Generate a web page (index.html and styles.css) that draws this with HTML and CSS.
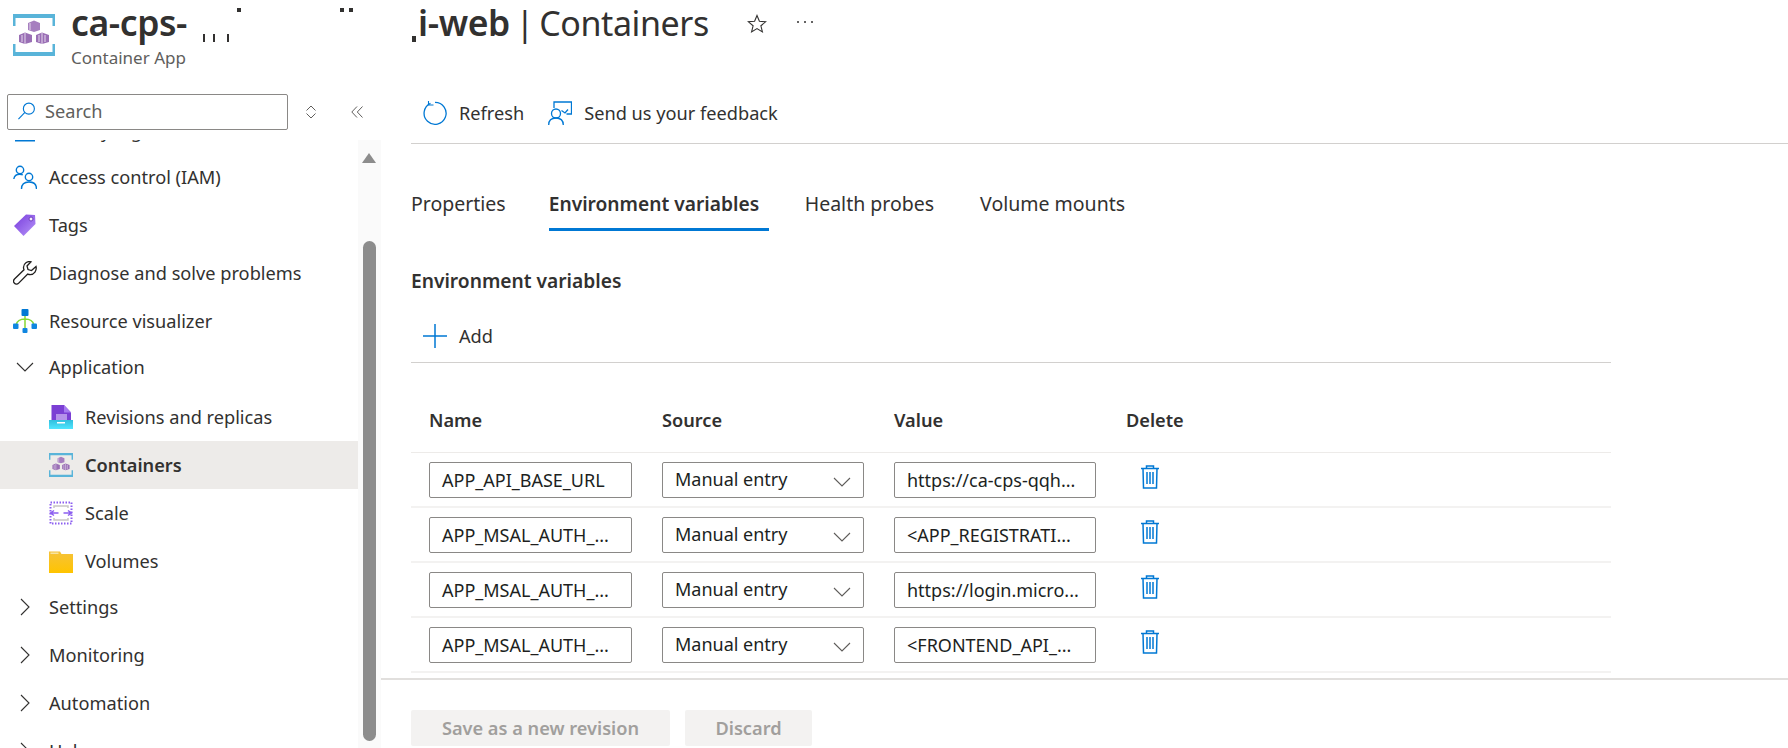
FILE: index.html
```html
<!DOCTYPE html>
<html lang="en">
<head>
  <meta charset="UTF-8">
  <title>Containers - Container App</title>
  <link rel="stylesheet" href="styles.css">
</head>
<body>

  <svg class="sprite" width="0" height="0">
    <symbol id="app-icon" viewBox="0 0 42 42">
      <path d="M0 0h42v12h-2.500V4H2.500v8H0zM0 30h2.500v8h37v-8H42v12H0z" fill="#59b4d9"/>
      <path d="M0 0h42v3.500H0zM0 38.500h42V42H0z" fill="#59b4d9"/>
      <path d="M15 9l6-2.500V18l-6-2zM21 6.500l6 2.500v7l-6 2z" fill="#a67fbf"/>
      <path d="M6 21l6-2.500V30l-6-2zM12 18.500l7 2.500v7l-7 2z" fill="#9a6fb5"/>
      <path d="M23 21l6-2.500V30l-6-2zM29 18.500l7 2.500v7l-7 2z" fill="#9a6fb5"/>
      <path d="M17 9v7M9 21v7M26 21v7M32 21v7M12 19v11M29 19v11" stroke="#e6daee" fill="none"/>
    </symbol>
    <symbol id="trash" viewBox="0 0 20 24">
      <path d="M1 3.500h18M6.500 3.500V1h7v2.500M3 3.500l.5 19.500h13L17 3.500M7 7v12M10 7v12M13 7v12" fill="none" stroke="#0078d4" stroke-width="1.500"/>
    </symbol>
    <symbol id="chev-down" viewBox="0 0 18 10">
      <path d="M1 1l8 8 8-8" fill="none" stroke="currentColor" stroke-width="1.100"/>
    </symbol>
    <symbol id="chev-right" viewBox="0 0 10 18">
      <path d="M1 1l8 8-8 8" fill="none" stroke="currentColor" stroke-width="1.100"/>
    </symbol>
  </svg>

  <header class="blade-header">
    <svg class="app-icon"><use href="#app-icon"/></svg>
    <div class="blade-titles">
      <div class="title-row">
        <h1><b>ca-cps-</b><span class="redacted"><i class="mark m1"></i><i class="mark m2"></i><i class="mark m3"></i><i class="mark m4"></i><i class="mark m5"></i><i class="mark m6"></i></span><b><span class="scrap"></span>i-web</b> | Containers</h1>
        <svg class="star" viewBox="0 0 20 20"><path d="M10 1.500l2.400 5.800 6.200.5-4.700 4 1.500 6.100-5.400-3.300-5.400 3.300 1.500-6.100-4.700-4 6.200-.5z" fill="none" stroke="#323130" stroke-width="1.100"/></svg>
        <svg class="dots" viewBox="0 0 16 2"><circle cx="1" cy="1" r="1"/><circle cx="8" cy="1" r="1"/><circle cx="15" cy="1" r="1"/></svg>
      </div>
      <div class="blade-sub">Container App</div>
    </div>
  </header>

  <div class="blade-body">
    <aside class="sidebar">
      <div class="search-row">
        <div class="search-box">
          <svg class="search-icon" viewBox="0 0 20 20"><circle cx="12.500" cy="7" r="5.800" fill="none" stroke="#0078d4" stroke-width="1.200"/><path d="M8.300 11L1.500 18" stroke="#0078d4" stroke-width="1.200"/></svg>
          <span>Search</span>
        </div>
        <svg class="updown" viewBox="0 0 12 14"><path d="M1.500 5.500L6 1l4.500 4.500M1.500 8.500L6 13l4.500-4.500" fill="none" stroke="#605e5c" stroke-width="1"/></svg>
        <svg class="collapse" viewBox="0 0 12 12"><path d="M6 .5L.8 6 6 11.500M11.500 .5L6.300 6l5.200 5.500" fill="none" stroke="#605e5c" stroke-width="1"/></svg>
      </div>

      <div class="nav-wrap">
        <nav class="nav">
          <a class="item clipped">
            <svg class="icon" viewBox="0 0 24 24"><rect x="2" y="2" width="20" height="20.500" fill="#0078d4"/></svg>
            Activity log
          </a>
          <a class="item">
            <svg class="icon" viewBox="0 0 24 24"><g fill="none" stroke="#0078d4" stroke-width="1.400"><circle cx="7" cy="5" r="3.700"/><circle cx="16" cy="12" r="3.700"/><path d="M.8 14c.5-3 3-4.800 6-4.800 1.200 0 2.200.3 3 .8M8.500 24c0-4.500 3-7 7.500-7s7.500 2.500 7.500 7"/></g></svg>
            Access control (IAM)
          </a>
          <a class="item">
            <svg class="icon" viewBox="0 0 24 24"><defs><linearGradient id="tag-fill" x1="0" y1="0" x2="1" y2="1"><stop offset="0" stop-color="#773adc"/><stop offset="1" stop-color="#b796f9"/></linearGradient></defs><path d="M1 13L13 1.500l9 .5.500 9L10.500 23z" fill="url(#tag-fill)"/><circle cx="18" cy="6" r="2" fill="#f2edfb" stroke="#6f3bc0"/></svg>
            Tags
          </a>
          <a class="item">
            <svg class="icon" viewBox="0 0 24 24"><path d="M23 5.500l-4.500 4-3.500-1-1-3.500 4-4.200c-3.500-1-7.500 1.500-7.500 5.500 0 1 .2 1.800.5 2.500L1.500 18c-1.500 1.600-.8 3.500 0 4.300s2.700 1.400 4.200-.2l9-9c.8.300 1.600.5 2.500.5 4 0 6.800-3.800 5.800-8.100z" fill="none" stroke="#201f1e" stroke-width="1.300"/></svg>
            Diagnose and solve problems
          </a>
          <a class="item">
            <svg class="icon" viewBox="0 0 24 24"><path d="M12 6v16M3 16c1-4 5-6 9-6s8 2 9 6" fill="none" stroke="#86d633" stroke-width="1.500"/><rect x="8.500" y="0" width="7" height="7" rx="1" fill="#0078d4"/><rect x="0" y="14.500" width="5.500" height="5.500" rx="1" fill="#0f86e0"/><rect x="18.500" y="14.500" width="5.500" height="5.500" rx="1" fill="#0f86e0"/><rect x="9.500" y="19" width="5" height="5" rx="1" fill="#0f86e0"/></svg>
            Resource visualizer
          </a>
          <a class="item group open">
            <svg class="chev-down"><use href="#chev-down"/></svg>
            Application
          </a>
          <a class="item sub first-sub">
            <svg class="icon" viewBox="0 0 24 24"><defs><linearGradient id="tray-fill" x1="0" y1="0" x2="0" y2="1"><stop offset="0" stop-color="#32bedd"/><stop offset="1" stop-color="#50e6ff"/></linearGradient></defs><path d="M2.500 0H15l7 7.500V16H2.500z" fill="#7b3fd4"/><path d="M15 0l7 7.500h-7z" fill="#a67af0"/><rect x="7" y="9" width="11" height="6" fill="#b692ea"/><path d="M0 15h24v9H0z" fill="url(#tray-fill)"/><rect x="8" y="17" width="8" height="1.500" fill="#fff"/></svg>
            Revisions and replicas
          </a>
          <a class="item sub active">
            <svg class="icon"><use href="#app-icon"/></svg>
            Containers
          </a>
          <a class="item sub">
            <svg class="icon" viewBox="0 0 24 24"><rect x="1.500" y="1.500" width="21" height="21" fill="none" stroke="#8c5ff0" stroke-width="2" stroke-dasharray="1.500 1.500"/><path d="M5 7V5h14v2M5 17v2h14v-2" fill="none" stroke="#c8c6c4" stroke-width="1.500"/><path d="M1.500 12h8M5 9.500L1.500 12 5 14.500M22.500 12h-8M19 9.500l3.500 2.500-3.500 2.500" fill="none" stroke="#8c5ff0" stroke-width="1.500"/></svg>
            Scale
          </a>
          <a class="item sub last-sub">
            <svg class="icon" viewBox="0 0 24 24"><defs><linearGradient id="folder-fill" x1="0" y1="0" x2="0" y2="1"><stop offset="0" stop-color="#f5c23a"/><stop offset="1" stop-color="#ffc400"/></linearGradient></defs><path d="M0 2.500h11l1.500 2.500H24v19H0z" fill="url(#folder-fill)"/><rect x="1.500" y="3.500" width="8" height="1.500" fill="#f7e3a1"/></svg>
            Volumes
          </a>
          <a class="item group">
            <svg class="chev-right"><use href="#chev-right"/></svg>
            Settings
          </a>
          <a class="item group">
            <svg class="chev-right"><use href="#chev-right"/></svg>
            Monitoring
          </a>
          <a class="item group">
            <svg class="chev-right"><use href="#chev-right"/></svg>
            Automation
          </a>
          <a class="item group">
            <svg class="chev-right"><use href="#chev-right"/></svg>
            Help
          </a>
        </nav>
        <div class="scrollbar">
          <div class="scroll-up"></div>
          <div class="scroll-thumb"></div>
        </div>
      </div>
    </aside>

    <main class="content">
      <div class="toolbar">
        <a class="tool">
          <svg class="tool-icon" viewBox="0 0 24 24"><path d="M7.500 2.300a11 11 0 1 0 4.500-1" fill="none" stroke="#0078d4" stroke-width="1.300"/><path d="M5.500 0v4h5" fill="none" stroke="#0078d4" stroke-width="1.100"/></svg>
          Refresh
        </a>
        <a class="tool">
          <svg class="tool-icon" viewBox="0 0 24 24"><g fill="none" stroke="#0078d4" stroke-width="1.300"><path d="M6 7V1h17.500v12h-5"/><circle cx="8" cy="12.500" r="4.500"/><path d="M.7 24c0-4.500 3-7 7.300-7s7.300 2.500 7.300 7"/><path d="M13.500 9.500l3.500 2.500 3-3.500"/></g></svg>
          Send us your feedback
        </a>
      </div>

      <div class="tabs">
        <a class="tab">Properties</a>
        <a class="tab selected">Environment variables</a>
        <a class="tab">Health probes</a>
        <a class="tab">Volume mounts</a>
      </div>

      <h2>Environment variables</h2>

      <div class="add-bar">
        <a class="tool">
          <svg class="tool-icon" viewBox="0 0 24 24"><path d="M12 0v24M0 12h24" stroke="#0078d4" stroke-width="1.500"/></svg>
          Add
        </a>
      </div>

      <div class="env-table">
        <div class="env-head">
          <span>Name</span>
          <span>Source</span>
          <span>Value</span>
          <span>Delete</span>
        </div>
        <div class="env-row">
          <div class="field">APP_API_BASE_URL</div>
          <div class="field select">Manual entry<svg class="chev-down"><use href="#chev-down"/></svg></div>
          <div class="field">https://ca-cps-qqh...</div>
          <svg class="trash"><use href="#trash"/></svg>
        </div>
        <div class="env-row">
          <div class="field">APP_MSAL_AUTH_...</div>
          <div class="field select">Manual entry<svg class="chev-down"><use href="#chev-down"/></svg></div>
          <div class="field">&lt;APP_REGISTRATI...</div>
          <svg class="trash"><use href="#trash"/></svg>
        </div>
        <div class="env-row">
          <div class="field">APP_MSAL_AUTH_...</div>
          <div class="field select">Manual entry<svg class="chev-down"><use href="#chev-down"/></svg></div>
          <div class="field">https://login.micro...</div>
          <svg class="trash"><use href="#trash"/></svg>
        </div>
        <div class="env-row">
          <div class="field">APP_MSAL_AUTH_...</div>
          <div class="field select">Manual entry<svg class="chev-down"><use href="#chev-down"/></svg></div>
          <div class="field">&lt;FRONTEND_API_...</div>
          <svg class="trash"><use href="#trash"/></svg>
        </div>
      </div>

      <div class="footer">
        <button class="btn save" disabled>Save as a new revision</button>
        <button class="btn discard" disabled>Discard</button>
      </div>
    </main>
  </div>

</body>
</html>
```

FILE: styles.css
```css
* {
  box-sizing: border-box;
}

html, body {
  height: 100%;
}

body {
  margin: 0;
  overflow: hidden;
  background: #fff;
  color: #323130;
  font-family: "Noto Sans", "Open Sans", sans-serif;
  font-size: 18.2px;
}

a {
  color: inherit;
}

.sprite {
  position: absolute;
}

/* header */
.blade-header {
  display: flex;
  height: 82px;
  padding-left: 13px;
}

.app-icon {
  width: 42px;
  height: 42px;
  margin-top: 14px;
  margin-right: 16px;
  flex: none;
}

.title-row {
  display: flex;
  align-items: center;
  height: 44px;
}

h1 {
  margin: 0;
  font-size: 34px;
  font-weight: 400;
  line-height: 44px;
  white-space: nowrap;
  letter-spacing: -0.4px;
  word-spacing: -3px;
}

h1 b {
  font-size: 35.500px;
  font-weight: 600;
}

.redacted {
  position: relative;
  display: inline-block;
  width: 225px;
  height: 42px;
  vertical-align: top;
}

.mark {
  position: absolute;
  background: #323130;
}

.m1 { left: 16px; top: 34px; width: 2px; height: 8px; }
.m2 { left: 26px; top: 34px; width: 2px; height: 8px; }
.m3 { left: 40px; top: 34px; width: 2px; height: 8px; }
.m4 { left: 50px; top: 8px; width: 4px; height: 4px; }
.m5 { left: 153px; top: 8px; width: 4px; height: 4px; }
.m6 { left: 162px; top: 8px; width: 4px; height: 4px; }

.scrap {
  display: inline-block;
  width: 4px;
  height: 6px;
  margin-right: 2px;
  background: #323130;
  vertical-align: -6px;
}

.star {
  width: 20px;
  height: 20px;
  margin-top: 4px;
  margin-left: 38px;
}

.dots {
  width: 16px;
  height: 2px;
  margin-left: 30px;
  fill: #323130;
}

.blade-sub {
  margin-top: 4px;
  font-size: 17px;
  line-height: 20px;
  color: #605e5c;
}

.blade-body {
  display: flex;
  height: 666px;
}

/* sidebar */
.sidebar {
  width: 381px;
  flex: none;
}

.search-row {
  display: flex;
  align-items: center;
  height: 36px;
  margin-top: 12px;
  padding-left: 7px;
}

.search-box {
  display: flex;
  align-items: center;
  width: 281px;
  height: 36px;
  padding: 0 0 2px 9px;
  border: 1px solid #8a8886;
  border-radius: 2px;
  color: #605e5c;
}

.search-icon {
  width: 19px;
  height: 19px;
  margin-right: 9px;
}

.updown {
  width: 12px;
  height: 14px;
  margin-left: 17px;
}

.collapse {
  width: 12px;
  height: 12px;
  margin-left: 34px;
}

.nav-wrap {
  display: flex;
  height: 608px;
  margin-top: 10px;
  overflow: hidden;
}

.nav {
  width: 358px;
  flex: none;
}

.item {
  display: flex;
  align-items: center;
  gap: 12px;
  height: 48px;
  padding-left: 13px;
  white-space: nowrap;
}

.clipped {
  margin-top: -33px;
  margin-bottom: -2px;
}

.icon {
  width: 24px;
  height: 24px;
  flex: none;
}

.open {
  height: 44px;
}

.group svg {
  color: #323130;
}

.chev-down {
  width: 18px;
  height: 10px;
  flex: none;
}

.chev-right {
  width: 10px;
  height: 18px;
  flex: none;
}

.group .chev-down {
  margin: 0 3px;
}

.group .chev-right {
  margin: 0 7px;
}

.sub {
  padding-left: 49px;
}

.first-sub {
  margin-top: 4px;
}

.last-sub {
  margin-bottom: -2px;
}

.active {
  background: #edebe9;
  font-weight: 600;
}

.scrollbar {
  width: 23px;
  flex: none;
  padding: 13px 5px 0;
  background: #fafafa;
}

.scroll-up {
  width: 0;
  height: 0;
  margin-left: -1px;
  border-left: 7.500px solid transparent;
  border-right: 7.500px solid transparent;
  border-bottom: 10px solid #8c8c8c;
}

.scroll-thumb {
  width: 13px;
  height: 500px;
  margin-top: 78px;
  border-radius: 7px;
  background: #8c8c8c;
}

/* main */
.content {
  flex: 1;
  min-width: 0;
}

.toolbar {
  display: flex;
  gap: 24px;
  height: 62px;
  margin-left: 30px;
  padding: 7px 0 0 12px;
  border-bottom: 1px solid #d2d0ce;
}

.tool {
  display: flex;
  align-items: center;
  gap: 12px;
  height: 48px;
  white-space: nowrap;
}

.tool-icon {
  width: 24px;
  height: 24px;
  flex: none;
}

.tabs {
  display: flex;
  gap: 36px;
  height: 87px;
  margin-left: 30px;
  padding-top: 38px;
  font-size: 19.500px;
}

.tab {
  height: 49px;
  padding-top: 10px;
  padding-right: 7px;
  line-height: 24px;
}

.tab.selected {
  width: 220px;
  padding-right: 0;
  border-bottom: 3px solid #0078d4;
  font-weight: 600;
  font-size: 19.200px;
}

.tab.selected + .tab {
  padding-right: 10px;
}

h2 {
  margin: 37px 0 0 30px;
  font-size: 19.200px;
  font-weight: 600;
  line-height: 26px;
}

.add-bar {
  width: 1200px;
  height: 69px;
  margin-left: 30px;
  padding: 18px 0 0 12px;
  border-bottom: 1px solid #d2d0ce;
}

.env-table {
  width: 1200px;
  margin-left: 30px;
}

.env-head,
.env-row {
  display: grid;
  grid-template-columns: 203px 202px 202px auto;
  column-gap: 30px;
  padding-left: 18px;
}

.env-head {
  align-items: center;
  height: 90px;
  padding-top: 24px;
  border-bottom: 1px solid #edebe9;
  font-weight: 600;
}

.env-row {
  align-items: start;
  height: 55px;
  padding-top: 9px;
  border-bottom: 2px solid #f3f2f1;
}

.field {
  display: flex;
  align-items: center;
  justify-content: space-between;
  height: 36px;
  padding: 0 12px;
  border: 1px solid #8a8886;
  border-radius: 2px;
  color: #201f1e;
  font-size: 18px;
  white-space: nowrap;
  overflow: hidden;
}

.select {
  padding-bottom: 2px;
}

.select svg {
  margin-top: 6px;
  color: #605e5c;
}

.trash {
  width: 20px;
  height: 24px;
  margin: 3px 0 0 14px;
}

.footer {
  display: flex;
  gap: 15px;
  height: 69px;
  margin-top: 5px;
  padding: 30px 0 0 30px;
  border-top: 2px solid #e1dfdd;
}

.btn {
  height: 36px;
  border: none;
  border-radius: 2px;
  background: #f3f2f1;
  color: #a19f9d;
  font-family: inherit;
  font-size: 18.200px;
  font-weight: 600;
}

.save {
  width: 259px;
}

.discard {
  width: 127px;
}
```
